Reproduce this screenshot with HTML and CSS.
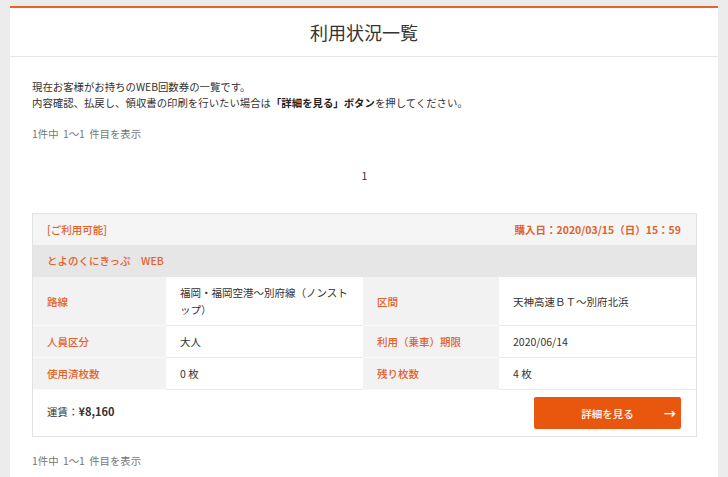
FILE: index.html
```html
<!DOCTYPE html>
<html lang="ja">
<head>
<meta charset="utf-8">
<title>利用状況一覧</title>
<link rel="stylesheet" href="styles.css">
</head>
<body>
<main class="panel">
  <h1 class="title">利用状況一覧</h1>
  <div class="content">
    <p class="intro">現在お客様がお持ちのWEB回数券の一覧です。<br>内容確認、払戻し、領収書の印刷を行いたい場合は<b>「詳細を見る」ボタン</b>を押してください。</p>
    <p class="count">1件中 1〜1 件目を表示</p>
    <div class="pager">1</div>
    <section class="card">
      <div class="card-head">
        <span class="status">[ご利用可能]</span>
        <span class="bought">購入日：2020/03/15（日）15：59</span>
      </div>
      <div class="card-name">とよのくにきっぷ　WEB</div>
      <table class="info">
        <colgroup>
          <col class="c-l1"><col class="c-v1"><col class="c-l2"><col class="c-v2">
        </colgroup>
        <tr>
          <th>路線</th><td>福岡・福岡空港〜別府線（ノンストップ）</td>
          <th>区間</th><td>天神高速ＢＴ〜別府北浜</td>
        </tr>
        <tr>
          <th>人員区分</th><td>大人</td>
          <th>利用（乗車）期限</th><td>2020/06/14</td>
        </tr>
        <tr>
          <th>使用済枚数</th><td>0 枚</td>
          <th>残り枚数</th><td>4 枚</td>
        </tr>
      </table>
      <div class="card-foot">
        <span class="fare">運賃：<b>¥8,160</b></span>
        <a class="btn" href="#"><span>詳細を見る</span><span class="arrow">→</span></a>
      </div>
    </section>
    <p class="count bottom">1件中 1〜1 件目を表示</p>
  </div>
</main>
</body>
</html>
```

FILE: styles.css
```css
* { box-sizing: border-box; }
html, body { margin: 0; padding: 0; }
body {
  background: #ececec;
  padding-top: 6px;
  font-family: "Noto Sans CJK JP", "Noto Sans", sans-serif;
  color: #333;
  height: 477px;
  overflow: hidden;
}
.panel {
  margin: 0 10px;
  background: #fff;
  border-top: 2px solid #e8602a;
  min-height: 480px;
}
.title {
  margin: 0;
  height: 49px;
  line-height: 48px;
  text-align: center;
  font-size: 18px;
  font-weight: 400;
  color: #333;
  border-bottom: 1px solid #e6e6e6;
}
.content {
  padding: 22px 21px 0 22px;
}
.intro {
  margin: 0;
  font-size: 10.4px;
  line-height: 16px;
  color: #333;
}
.intro b { font-weight: 700; color: #222; }
.count {
  margin: 15px 0 0;
  font-size: 10.4px;
  line-height: 16px;
  color: #777;
  word-spacing: 2px;
}
.count.bottom { margin-top: 16px; }
.pager {
  margin-top: 26px;
  text-align: center;
  font-size: 10.5px;
  line-height: 16px;
  color: #333;
}
.card {
  margin-top: 29px;
  border: 1px solid #e2e2e2;
}
.card-head {
  display: flex;
  justify-content: space-between;
  align-items: center;
  height: 31px;
  padding: 0 15px 0 14px;
  background: #f5f5f5;
  font-size: 10.5px;
  color: #e2622c;
}
.status { font-weight: 500; }
.bought { font-weight: 700; }
.card-name {
  height: 32px;
  line-height: 32px;
  padding: 0 14px;
  background: #e6e6e6;
  color: #e2622c;
  font-size: 10.5px;
  font-weight: 500;
}
.info {
  width: 100%;
  border-collapse: collapse;
  table-layout: fixed;
  font-size: 10.5px;
}
.c-l1 { width: 133px; }
.c-v1 { width: 197px; }
.c-l2 { width: 136px; }
.c-v2 { width: 197px; }
.info th, .info td {
  padding: 7px 12px 7px 14px;
  line-height: 17px;
  border-bottom: 1px solid #e8e8e8;
  text-align: left;
  vertical-align: middle;
  line-break: loose;
}
.info th {
  background: #f2f2f2;
  color: #e2622c;
  font-weight: 500;
  border-bottom-color: #fafafa;
}
.info td { color: #333; font-weight: 400; }
.card-foot {
  display: flex;
  justify-content: space-between;
  align-items: flex-start;
  padding: 7px 15px 7px 14px;
}
.fare {
  margin-top: 6px;
  font-size: 10.5px;
  font-weight: 400;
  color: #333;
  line-height: 16px;
}
.fare b { font-weight: 700; font-size: 11px; }
.btn {
  display: flex;
  align-items: center;
  justify-content: center;
  position: relative;
  width: 147px;
  height: 32px;
  background: #e9560e;
  border-radius: 2px;
  color: #fff;
  text-decoration: none;
  font-size: 10.5px;
  font-weight: 500;
}
.btn .arrow {
  position: absolute;
  right: 5px;
  top: 50%;
  transform: translateY(-50%);
  font-size: 12px;
  font-weight: 700;
}
```
